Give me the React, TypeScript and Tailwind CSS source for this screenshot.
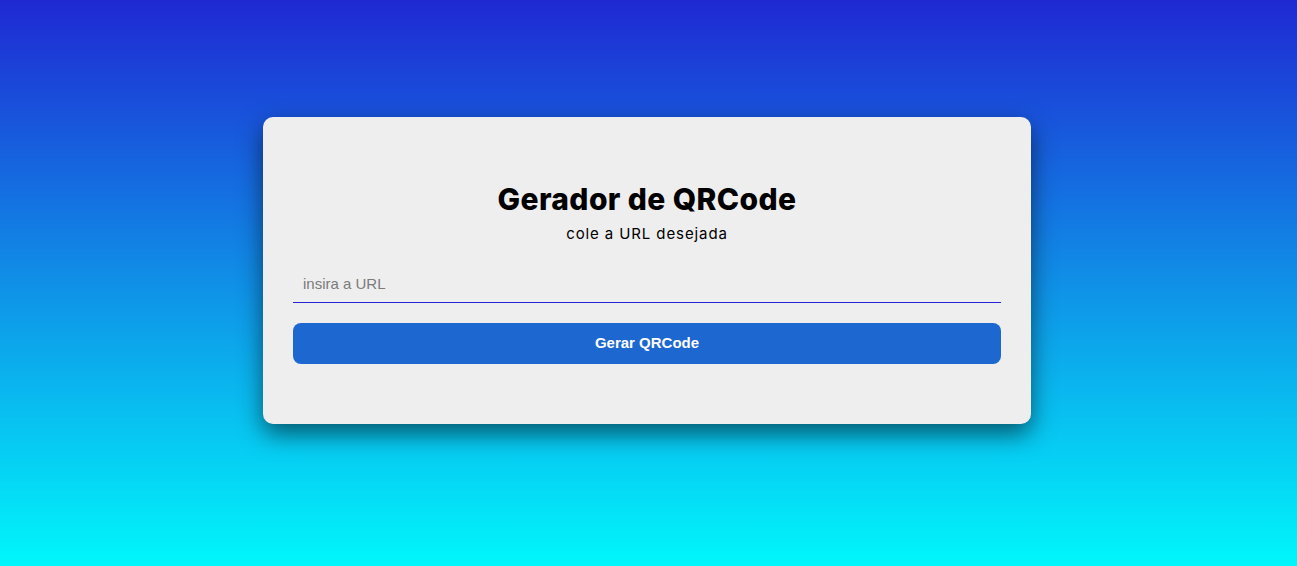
export default function App() {
  return (
    <div className="min-h-[566px] w-full bg-[linear-gradient(to_bottom,#1f29d3,#00f7fb)] flex justify-center pt-[117px] pr-[3px] font-['Liberation_Sans',Arial,sans-serif]">
      <div className="w-[768px] h-[307px] bg-[#eeeeee] rounded-[10px] shadow-[0_10px_25px_rgba(0,0,0,0.55)] px-[30px] pt-[60px] pb-[60px] flex flex-col items-center">
        <h1 className="text-[30px] leading-[45px] font-extrabold text-black tracking-[0.4px] font-['Inter',sans-serif]">
          Gerador de QRCode
        </h1>
        <p className="text-[15px] leading-[22px] mt-[1px] text-black tracking-[0.9px] font-['Inter',sans-serif]">
          cole a URL desejada
        </p>
        <div className="mt-[20px] w-full">
          <input
            type="text"
            placeholder="insira a URL"
            className="block w-full h-[37px] bg-transparent border-0 px-[10px] text-[15px] text-black placeholder:text-[#7b7b7b] outline-none"
          />
          <div className="h-px w-full bg-[#2424d4]" />
        </div>
        <button className="mt-[20px] w-full h-[41px] rounded-[8px] bg-[#1c67d0] text-white text-[15px] font-bold">
          Gerar QRCode
        </button>
      </div>
    </div>
  );
}
